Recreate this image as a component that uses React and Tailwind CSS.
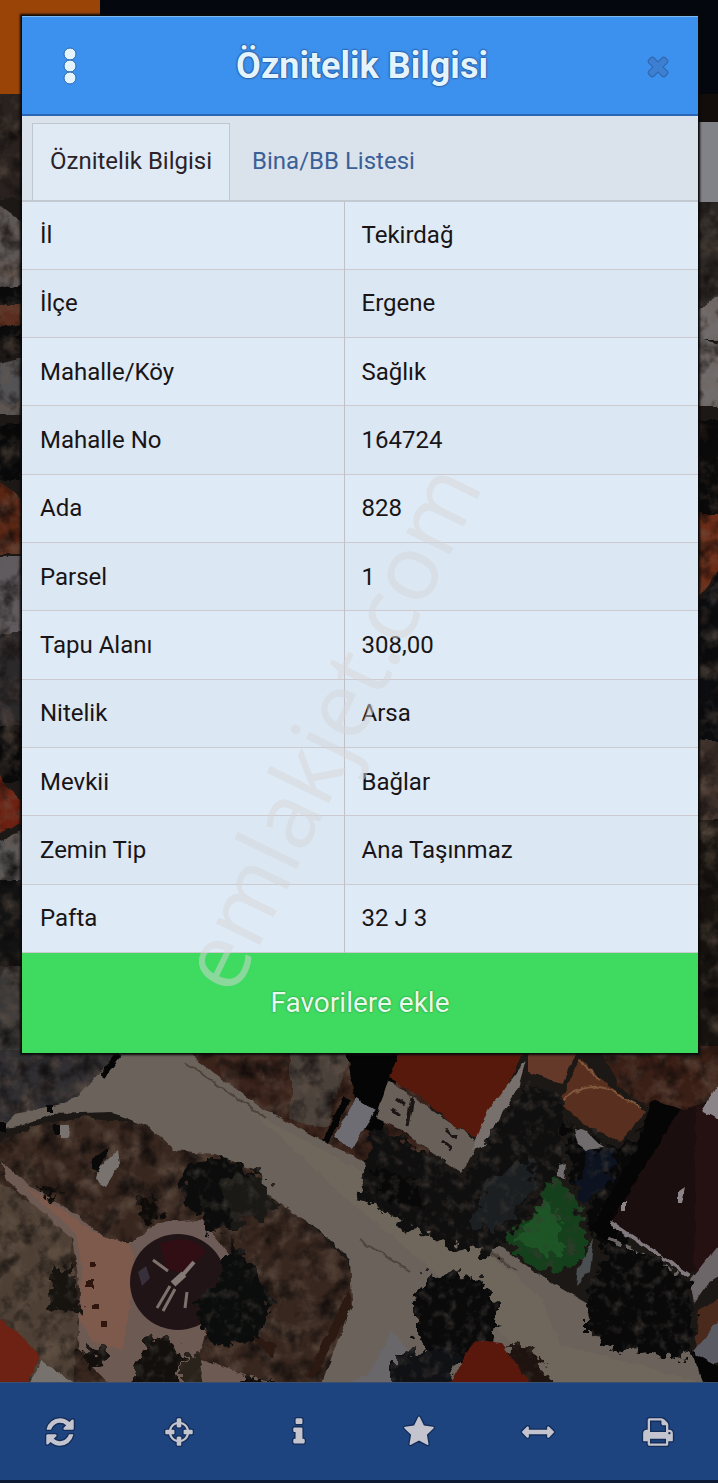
// src/App.jsx
import React from "react";

const ROWS = [
  ["İl", "Tekirdağ"],
  ["İlçe", "Ergene"],
  ["Mahalle/Köy", "Sağlık"],
  ["Mahalle No", "164724"],
  ["Ada", "828"],
  ["Parsel", "1"],
  ["Tapu Alanı", "308,00"],
  ["Nitelik", "Arsa"],
  ["Mevkii", "Bağlar"],
  ["Zemin Tip", "Ana Taşınmaz"],
  ["Pafta", "32 J 3"],
];

const ICONS = {
  close:
    "M1490 1322q0 40-28 68l-136 136q-28 28-68 28t-68-28l-294-294-294 294q-28 28-68 28t-68-28l-136-136q-28-28-28-68t28-68l294-294-294-294q-28-28-28-68t28-68l136-136q28-28 68-28t68 28l294 294 294-294q28-28 68-28t68 28l136 136q28 28 28 68t-28 68l-294 294 294 294q28 28 28 68z",
  refresh:
    "M1639 1056q0 5-1 7-64 268-268 434.5t-478 166.5q-146 0-282.5-55t-243.5-157l-129 129q-19 19-45 19t-45-19-19-45v-448q0-26 19-45t45-19h448q26 0 45 19t19 45-19 45l-137 137q71 66 161 102t187 36q134 0 250-65t186-179q11-17 53-117 8-23 30-23h192q13 0 22.5 9.5t9.5 22.5zm25-800v448q0 26-19 45t-45 19h-448q-26 0-45-19t-19-45 19-45l138-138q-148-137-349-137-134 0-250 65t-186 179q-11 17-53 117-8 23-30 23h-199q-13 0-22.5-9.5t-9.5-22.5v-7q65-268 270-434.5t480-166.5q146 0 284 55.5t245 156.5l130-129q19-19 45-19t45 19 19 45z",
  crosshairs:
    "M1325 1024h-109q-26 0-45-19t-19-45v-128q0-26 19-45t45-19h109q-32-108-112.5-188.5t-188.5-112.5v109q0 26-19 45t-45 19h-128q-26 0-45-19t-19-45v-109q-108 32-188.5 112.5t-112.5 188.5h109q26 0 45 19t19 45v128q0 26-19 45t-45 19h-109q32 108 112.5 188.5t188.5 112.5v-109q0-26 19-45t45-19h128q26 0 45 19t19 45v109q108-32 188.5-112.5t112.5-188.5zm339-192v128q0 26-19 45t-45 19h-143q-37 161-154.5 278.5t-278.5 154.5v143q0 26-19 45t-45 19h-128q-26 0-45-19t-19-45v-143q-161-37-278.5-154.5t-154.5-278.5h-143q-26 0-45-19t-19-45v-128q0-26 19-45t45-19h143q37-161 154.5-278.5t278.5-154.5v-143q0-26 19-45t45-19h128q26 0 45 19t19 45v143q161 37 278.5 154.5t154.5 278.5h143q26 0 45 19t19 45z",
  info: "M1216 1344v128q0 26-19 45t-45 19h-512q-26 0-45-19t-19-45v-128q0-26 19-45t45-19h64v-384h-64q-26 0-45-19t-19-45v-128q0-26 19-45t45-19h384q26 0 45 19t19 45v576h64q26 0 45 19t19 45zm-128-1152v192q0 26-19 45t-45 19h-256q-26 0-45-19t-19-45v-192q0-26 19-45t45-19h256q26 0 45 19t19 45z",
  star: "M1728 647q0 22-26 48l-363 354 86 500q1 7 1 20 0 21-10.5 35.5t-30.5 14.5q-19 0-40-12l-449-236-449 236q-22 12-40 12-21 0-31.5-14.5t-10.5-35.5q0-6 2-20l86-500-364-354q-25-27-25-48 0-37 56-46l502-73 225-455q19-41 49-41t49 41l225 455 502 73q56 9 56 46z",
  arrows:
    "M1792 896q0 26-19 45l-256 256q-19 19-45 19t-45-19-19-45v-128h-1024v128q0 26-19 45t-45 19-45-19l-256-256q-19-19-19-45t19-45l256-256q19-19 45-19t45 19 19 45v128h1024v-128q0-26 19-45t45-19 45 19l256 256q19 19 19 45z",
  print:
    "M448 1536h896v-256h-896v256zm0-640h896v-384h-160q-40 0-68-28t-28-68v-160h-640v640zm1152 64q0-26-19-45t-45-19-45 19-19 45 19 45 45 19 45-19 19-45zm128 0v416q0 13-9.5 22.5t-22.5 9.5h-224v160q0 40-28 68t-68 28h-960q-40 0-68-28t-28-68v-160h-224q-13 0-22.5-9.5t-9.5-22.5v-416q0-79 56.5-135.5t135.5-56.5h64v-544q0-40 28-68t68-28h672q40 0 88 20t76 48l152 152q28 28 48 76t20 88v256h64q79 0 135.5 56.5t56.5 135.5z",
};

const TOOLS = [
  ["refresh", "Yenile"],
  ["crosshairs", "Konum"],
  ["info", "Bilgi"],
  ["star", "Favoriler"],
  ["arrows", "Ölçüm"],
  ["print", "Yazdır"],
];

function Icon({ name, outline, className }) {
  return (
    <svg
      viewBox="0 0 1792 1792"
      className={className}
      fill="currentColor"
      stroke={outline}
      strokeWidth="150"
      strokeLinejoin="round"
      paintOrder="stroke"
      overflow="visible"
      aria-hidden="true"
    >
      <path d={ICONS[name]} />
    </svg>
  );
}

// Dimmed aerial view behind the dialog
function AerialMap() {
  return (
    <svg
      viewBox="0 0 718 1483"
      preserveAspectRatio="xMidYMid slice"
      className="absolute inset-0 h-full w-full"
      aria-hidden="true"
    >
      <defs>
        {/* wobbly outlines for paths and roofs */}
        <filter id="rough" x="-5%" y="-5%" width="110%" height="110%" colorInterpolationFilters="sRGB">
          <feTurbulence type="fractalNoise" baseFrequency="0.1" numOctaves="2" seed="4" result="n" />
          <feDisplacementMap in="SourceGraphic" in2="n" scale="6" xChannelSelector="R" yChannelSelector="G" />
        </filter>
        {/* ragged outlines with a few lighter leaves */}
        <filter id="leaves" x="-5%" y="-5%" width="110%" height="110%" colorInterpolationFilters="sRGB">
          <feTurbulence type="fractalNoise" baseFrequency="0.09" numOctaves="3" seed="7" result="n" />
          <feDisplacementMap
            in="SourceGraphic"
            in2="n"
            scale="26"
            xChannelSelector="R"
            yChannelSelector="G"
            result="d"
          />
          <feColorMatrix in="n" values="0 0 0 0 0.24  0 0 0 0 0.22  0 0 0 0 0.2  0 2 0 0 -1" result="m" />
          <feComposite in="m" in2="d" operator="in" result="s" />
          <feMerge>
            <feMergeNode in="d" />
            <feMergeNode in="s" />
          </feMerge>
        </filter>
        <filter id="soil" x="0" y="0" width="100%" height="100%" colorInterpolationFilters="sRGB">
          <feTurbulence type="fractalNoise" baseFrequency="0.05" numOctaves="4" seed="9" result="n" />
          <feDisplacementMap
            in="SourceGraphic"
            in2="n"
            scale="10"
            xChannelSelector="R"
            yChannelSelector="G"
            result="d"
          />
          <feColorMatrix in="n" values="0 0 0 0 0.04  0 0 0 0 0.03  0 0 0 0 0.03  2 0 0 0 -0.9" result="m" />
          <feColorMatrix in="n" values="0 0 0 0 0.42  0 0 0 0 0.35  0 0 0 0 0.3  0 0 1.4 0 -0.6" result="l" />
          <feComposite in="m" in2="d" operator="in" result="s" />
          <feComposite in="l" in2="d" operator="in" result="t" />
          <feMerge>
            <feMergeNode in="d" />
            <feMergeNode in="t" />
            <feMergeNode in="s" />
          </feMerge>
        </filter>
      </defs>

      <rect width="718" height="1483" fill="#1c1815" />

      {/* left edge */}
      <g filter="url(#soil)">
        <path fill="#29221f" d="M-9 94h40v106H-9z" />
        <path fill="#5d5755" d="M-9 200l40 30v62H-9z" />
        <path fill="#0c0c0d" d="M-9 290l40-8v24H-9zM-9 335l40-22v8L-9 350z" />
        <path fill="#5a2d1e" d="M-9 304h40v18L-9 330z" />
        <path fill="#070707" d="M-9 344l40-14v20L-9 360z" />
        <path fill="#535255" d="M-9 365l40-10v60H-9z" />
        <path fill="#46464a" d="M-9 390l40 24v6L-9 398z" />
        <path fill="#08090a" d="M-9 424h40v56H-9z" />
        <path fill="#5a2614" d="M-9 476l40 28v50H-9z" />
        <path fill="#5f5b5e" d="M-9 556h40v78H-9z" />
        <path fill="#2c292b" d="M-9 634h40v96H-9z" />
        <path fill="#0a0a0b" d="M-9 726h40v55H-9z" />
        <path fill="#6c2010" d="M-9 765l40 48v6L-9 836z" />
        <path fill="#5c5959" d="M-9 845l40-20v60H-9z" />
        <path fill="#131313" d="M-9 880h40v90H-9z" />
        <path fill="#3b3938" d="M-9 966h40v94H-9z" />
      </g>

      {/* right edge */}
      <g filter="url(#soil)">
        <path fill="#2b2724" d="M686 202h42v120h-42z" />
        <path fill="#706c6b" d="M686 316l42-26v50h-42zM686 336l42 10v60h-42z" />
        <path fill="#0b0a0a" d="M686 420h42v100h-42z" />
        <path fill="#6c2d18" d="M686 514h42v46l-42 50z" />
        <path fill="#0c0d10" d="M686 620l42-60v190h-42z" />
        <path fill="#3d302a" d="M686 740h42v84h-42z" />
        <path fill="#16130f" d="M686 820h42v240h-42z" />
      </g>

      {/* ground */}
      <g filter="url(#soil)">
        <path fill="#302e31" d="M-9 1050h129l-45 55-45 16-39 12z" />
        <path fill="#3a231b" d="M180 1050h250v140l-60-20-105-55z" />
        <path fill="#4a413b" d="M290 1052h60l-22 75-38-6z" />
        <path fill="#38271f" d="M-9 1148l37-20 52-10 70 6 110 50 60 60 28 26 8 36-36 94H-9z" />
        <path fill="#4e4035" d="M-9 1180l77 44 10 80-4 88H-9z" />
      </g>
      <g filter="url(#rough)">
        <path
          fill="#6a625b"
          d="M120 1050h64l80 60 96 50 48 32 24 20 50 20 68 50 38 22 4 32 106 18 20 40H318l34-92-2-42-30-30-54-36-6-22-46-18-40-4-24-22-38-16-60 2-30 12-22 4 16-16 50-12 14-8z"
        />
        <path fill="#6f665c" d="M250 1110l110 60 60 50 60 26 60 50 20 48 140 38v10H560l-90-90-120-100z" />
        <path fill="#6a676a" d="M392 1330l24 30-24 30h-50l30-20z" />
        <path stroke="#4c443c" strokeWidth="2" fill="none" d="M185 1062l80 56 M360 1240l50 32 M480 1245l36 26" />
        <path stroke="#050505" strokeWidth="6" d="M101 1077l17-22" />
        <path fill="#070707" d="M0 1122h6v10H0zM46 1104h8v8h-8z" />
      </g>

      {/* park paths */}
      <g filter="url(#rough)">
        <path
          fill="#6d5a52"
          d="M2 1162l28 24 48 30 30 26h24l26-20 44-2 28 36 2 28-24 40-10 34 30 10 40 14 60 36h-18l-50-22-130 8-38-36-14-20 2-60-8-50-64-56z"
        />
        <path fill="#7d5a4c" d="M20 1184l40 24 36 26 34 10 4 24-4 40-8 42-30-10-12-20 2-50-6-36-34-32z" />
        <path fill="#6c5b57" d="M132 1242l26-20 44-2 26 34-4 18q-40-60-84 0z" />
        <path fill="#30150f" d="M90 1262h5v5h-5zM86 1280h8v8h-8zM92 1304h7v5h-7zM100 1322h8v5h-8z" />
      </g>
      <circle cx="178" cy="1282" r="48" fill="#211417" />
      <path fill="#310e13" d="M160 1244q30-12 46 8l-24 22-16-6z" />
      <path fill="#37303a" d="M138 1272l8-6 4 12-8 8z" />

      {/* trees on the island */}
      <g filter="url(#leaves)">
        <path fill="#0b0c0b" d="M188 1162l36-6 32 18 4 34-26 20-20 6-34-40z" />
        <path fill="#1b1916" d="M218 1180l44-6 14 34-44 20z" />
        <path fill="#0b0c0c" d="M196 1302l24-22 10-40 26 26 16 40-16 34-40 6-14-20z" />
        <path fill="#17130f" d="M50 1266h24v18l6 30-24-4-10-6 8-20z" />
        <path fill="#120f0c" d="M136 1360l12-20 22-2 12 24-6 24h-44zM80 1344l12 4 18 6-10 14-12-2z" />
        <path fill="#2a231b" d="M184 1350l16 4 4 36h-20z" />
        <path fill="#0f0b09" d="M38 1186l14-2 6 12-12 4zM140 1198l12-4 12 16-14 14-12-8zM230 1384q16-12 40 0z" />
      </g>
      <g filter="url(#rough)">
        <path fill="#2b1912" d="M252 1336l26 10-6 12zM308 1374l40-84 4 16-38 72z" />
        <path fill="#79736f" d="M98 1168l20-18 2 14-14 22-10-6zM60 1124h10l-2 14h-8z" />
        <path fill="#09090a" d="M92 1160l18-14-12 26-6-2zM53 1124h7v10h-5z" />
        <path fill="#6d2213" d="M-6 1314l30 24 16 18-14 30H-6z" />
        <path fill="#77726e" d="M28 1386l14-26 34 26z" />
      </g>
      <path stroke="#7e706b" strokeWidth="3" d="M153 1260l15 11M157 1308l13-22M163 1311l12-22M187 1292l-2 16" />
      <path stroke="#857975" strokeWidth="7" d="M173 1284l11-10" />
      <path stroke="#857975" strokeWidth="4" d="M180 1278l14-16" />

      {/* north houses */}
      <g filter="url(#rough)">
        <path fill="#050505" d="M346 1050h60l-26 86-20-10zM322 1140l22-44 6 4-22 44z" />
        <path fill="#6f6d74" d="M334 1138l22-40 20 12-24 38z" />
        <path fill="#6a605a" d="M388 1080l90 62-16 32-60-44-26-12z" />
        <path fill="#58190d" d="M402 1046h124l-44 94-28-14-34-30-31-18z" />
        <path fill="#78706c" d="M526 1060l-8 28-34 58-12 4 16-40 20-26z" />
        <path stroke="#1b1513" strokeWidth="3" d="M396 1098l9 7M391 1108l9 7M446 1130l10 8M442 1142l10 8M412 1098l-5 28" />
        <path fill="#64392a" d="M528 1046h50l-16 38-34-12z" />
        <path fill="#59301f" d="M580 1058l24 24 42 30-26 30-36-18-24-22z" />
        <path stroke="#80583d" strokeWidth="2" fill="none" d="M560 1102q30-24 54-10l28 16M578 1060l22 20" />
      </g>
      <path fill="#3a1f16" d="M600 1046h128v46l-40 20-40-4-30-22z" filter="url(#soil)" />

      {/* gardens */}
      <g filter="url(#leaves)">
        <path fill="#100f0f" d="M374 1126l40 20 50 34 26-40 34-56 34 10 4 70-70 94-70-24-64-36z" />
        <path fill="#080808" d="M376 1166l36 10 10 30-20 2-26-20zM560 1120l60 30 28-30 26 8-50 120-30-6z" />
        <path fill="#1b1f22" d="M488 1180l40-20 10 30-40 40-26-6z" />
        <path fill="#0c121f" d="M582 1150l36 4-10 34-30 20z" />
        <path fill="#15401c" d="M552 1174l16 14 20 50-10 24-32 12-30-20-10-16 30-28z" />
        <path fill="#1d5526" d="M546 1196l12 22 6 30-16 8-32-16z" />
      </g>
      <g filter="url(#rough)">
        <path fill="#706c6d" d="M574 1128l14 4 16 16-18 2-8-6zM558 1166l8-2-2 14-6-2z" />
        <path fill="#4b4f52" d="M578 1268l16-30-4 34-14 14z" />
      </g>

      {/* east house */}
      <g filter="url(#rough)">
        <path fill="#050505" d="M652 1100l32 10-72 134-22-14 46-80z" />
        <path fill="#1b0e0f" d="M680 1110l44-12v150l-34 26-80-52z" />
        <path fill="#251012" d="M696 1106l28-2v144l-30 26z" />
        <path stroke="#81797e" strokeWidth="4" d="M610 1222l80 54" />
        <path stroke="#6c6568" strokeWidth="4" strokeDasharray="14 5" d="M608 1238l70 36" />
        <path fill="#6c6668" d="M722 1240l-32 40 4 24 14-20 14-8z" />
        <path fill="#8b8589" d="M678 1192l8-6-4 18h-4zM621 1202h5v8h-5zM702 1110l22-34v46z" />
        <path fill="#4b2a1e" d="M698 1310l26-14v22l-28 36z" />
        <path fill="#5b5b63" d="M694 1350l30-36v46l-18 6z" />
        <path fill="#050506" d="M692 1352l32 18v16h-20z" />
      </g>
      <g filter="url(#leaves)">
        <path fill="#09090a" d="M588 1290l22-44 40 8 40 30 6 50-12 26-34-10-32 4-30-22z" />
        <path fill="#0a0a0b" d="M414 1300l14-24 32-4 26 12 12 24-8 34-24 20-34-6-18-28z" />
        <path fill="#101115" d="M392 1356l30-4 34-6-6 44h-58z" />
        <path fill="#1f1310" d="M504 1344l30 4 20 42h-30z" />
      </g>
      <path fill="#5a180d" d="M474 1340l26 4 36 46h-90z" filter="url(#rough)" />

      {/* app bar under the dialog */}
      <path fill="#05070f" d="M0 0h718v94H0z" />
      <path fill="#9b4408" d="M0 0h100v94H0z" />
      <path fill="#120c0a" d="M698 94h20v28h-20z" />
      <path fill="#818188" d="M698 122h20v80h-20z" />
    </svg>
  );
}

function Tabs() {
  return (
    <div role="tablist" className="flex h-[86px] border-b-2 border-[#c3c9d0] bg-[#dae3eb] pl-[10px] pt-[7px]">
      <button
        role="tab"
        aria-selected="true"
        className="border border-b-0 border-[#c0c6ce] bg-[#dfeaf5] px-[17px] pb-[2px] text-2xl text-[#2c2329]"
      >
        Öznitelik Bilgisi
      </button>
      <button role="tab" aria-selected="false" className="px-[22px] pb-[2px] text-2xl text-[#3b6098]">
        Bina/BB Listesi
      </button>
    </div>
  );
}

export default function App() {
  return (
    <div className="relative flex min-h-screen flex-col overflow-hidden bg-black font-[Roboto,sans-serif]">
      <AerialMap />

      <main className="relative mb-auto ml-[22px] mr-5 mt-4 shadow-[0_0_2px_2px_#0a0a0a]">
        <header className="flex h-[100px] items-center justify-between border-b-2 border-t border-b-[#2b65b3] border-t-[#7fb8ef] bg-[#3d91ee] pl-7 pr-4">
          <button aria-label="Menü" className="flex w-10 justify-center">
            <svg viewBox="0 0 14 38" className="h-[38px] w-[14px]" fill="#e4f4ff" stroke="#2a66ad" aria-hidden="true">
              <circle cx="7" cy="7" r="6" />
              <circle cx="7" cy="19" r="6" />
              <circle cx="7" cy="31" r="6" />
            </svg>
          </button>
          <h1 className="text-4xl font-bold text-[#e4f4ff] [text-shadow:0_0_2px_#173f78,0_0_2px_#173f78]">
            Öznitelik Bilgisi
          </h1>
          <button aria-label="Kapat" className="flex w-12 justify-center text-[#3d7fd0]">
            <Icon name="close" outline="#3067b0" className="size-7" />
          </button>
        </header>

        <Tabs />

        <table className="h-[751px] w-full border-collapse bg-[#deeaf5] text-2xl text-[#191416]">
          <tbody>
            {ROWS.map(([label, value]) => (
              <tr key={label} className="border-b border-[#ccc9cf] even:bg-[#dbe7f2]">
                <th scope="row" className="w-[322px] border-r border-[#c2c0c7] pl-[18px] text-left font-normal">
                  {label}
                </th>
                <td className="pl-[17px]">{value}</td>
              </tr>
            ))}
          </tbody>
        </table>

        <button className="h-[100px] w-full bg-[#3fda60] text-[28px] text-[#e6fbea] [text-shadow:0_0_2px_#1d7a35]">
          Favorilere ekle
        </button>

        <div className="pointer-events-none absolute inset-0 flex items-center justify-center pr-16 pt-96">
          <span className="-rotate-64 text-[91px] leading-none text-[#d6d6d8]/50 font-['Open_Sans',sans-serif]">
            emlakjet.com
          </span>
        </div>
      </main>

      <nav className="relative grid h-[101px] grid-cols-6 items-center border-b-[3px] border-t border-b-[#0d1a33] border-t-[#3d4f70] bg-[#1e4480]">
        {TOOLS.map(([name, label]) => (
          <button key={name} aria-label={label} className="flex justify-center text-[#c3c4ce]">
            <Icon name={name} outline="#132c58" className="size-8" />
          </button>
        ))}
      </nav>
    </div>
  );
}
